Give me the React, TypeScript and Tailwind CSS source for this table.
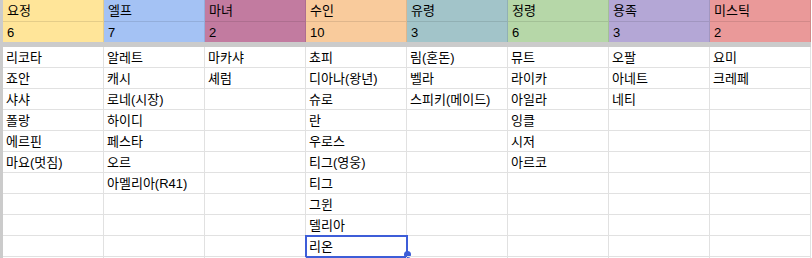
import React from "react";

const headers = [
  { name: "요정", count: "6", bg: "bg-[#ffe599]" },
  { name: "엘프", count: "7", bg: "bg-[#a4c2f4]" },
  { name: "마녀", count: "2", bg: "bg-[#c27ba0]" },
  { name: "수인", count: "10", bg: "bg-[#f9cb9c]" },
  { name: "유령", count: "3", bg: "bg-[#a2c4c9]" },
  { name: "정령", count: "6", bg: "bg-[#b6d7a8]" },
  { name: "용족", count: "3", bg: "bg-[#b4a7d6]" },
  { name: "미스틱", count: "2", bg: "bg-[#ea9999]" },
];

const columns: string[][] = [
  ["리코타", "죠안", "샤샤", "폴랑", "에르핀", "마요(멋짐)"],
  ["알레트", "캐시", "로네(시장)", "하이디", "페스타", "오르", "아멜리아(R41)"],
  ["마카샤", "셰럼"],
  ["쵸피", "디아나(왕년)", "슈로", "란", "우로스", "티그(영웅)", "티그", "그윈", "델리아", "리온"],
  ["림(혼돈)", "벨라", "스피키(메이드)"],
  ["뮤트", "라이카", "아일라", "잉클", "시저", "아르코"],
  ["오팔", "아네트", "네티"],
  ["요미", "크레페"],
];

const ROWS = 11;

export default function App() {
  return (
    <div
      className="w-[812px] h-[258px] overflow-hidden bg-white flex items-start text-[13px] text-black"
      style={{ fontFamily: '"Liberation Sans", Arial, "Noto Sans CJK KR", sans-serif' }}
    >
      <div className="w-[3px] h-[258px] shrink-0 bg-[#cbcbcb]" />
      <div className="flex flex-col shrink-0">
        <div className="grid grid-cols-[repeat(8,101px)] shrink-0">
          {headers.map((h) => (
            <div
              key={h.name}
              className={`${h.bg} h-[22px] border-r border-b border-black/10 pl-[4px] leading-[22px] whitespace-nowrap`}
            >
              {h.name}
            </div>
          ))}
        </div>
        <div className="grid grid-cols-[repeat(8,101px)] shrink-0">
          {headers.map((h) => (
            <div
              key={h.name}
              className={`${h.bg} h-[20px] border-r border-black/10 pl-[4px] leading-[21px] whitespace-nowrap`}
            >
              {h.count}
            </div>
          ))}
        </div>
        <div className="h-[5px] shrink-0 bg-[#cbcbcb]" />
        {Array.from({ length: ROWS }).map((_, r) => (
          <div key={r} className="grid grid-cols-[repeat(8,101px)] shrink-0">
            {columns.map((col, c) => {
              const selected = c === 3 && r === 9;
              return (
                <div
                  key={c}
                  className="relative h-[21px] border-r border-b border-[#e1e1e1] pl-[3px] leading-[21px] whitespace-nowrap"
                >
                  {col[r] ?? ""}
                  {selected && (
                    <>
                      <div className="absolute left-[-1px] top-[-1px] right-[-2px] bottom-[-2px] border-2 border-[#3d5dd8] pointer-events-none" />
                      <div className="absolute right-[-5px] bottom-[-2px] w-[7px] h-[7px] rounded-full bg-[#3d5dd8]" />
                    </>
                  )}
                </div>
              );
            })}
          </div>
        ))}
      </div>
    </div>
  );
}
